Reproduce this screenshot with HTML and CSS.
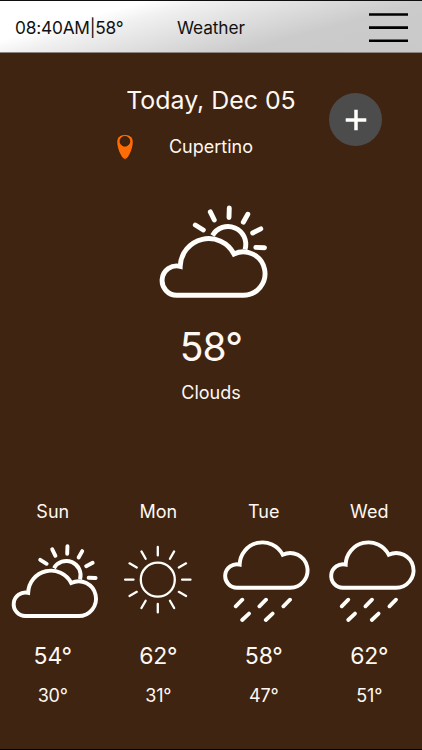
FILE: index.html
```
<!DOCTYPE html>
<html lang="en">
<head>
<meta charset="utf-8">
<title>Weather</title>
<link rel="stylesheet" href="styles.css">
</head>
<body>
<svg class="defs" aria-hidden="true">
  <symbol id="cloud" viewBox="0 0 130 115">
    <path d="M27 100.3A14.7 14.7 0 1 1 30.2 71.3A28.5 28.5 0 0 1 84 59A21.7 21.7 0 1 1 93 100.3Z"/>
  </symbol>
  <symbol id="partly" viewBox="0 0 130 115">
    <path d="M27 100.3A14.7 14.7 0 1 1 30.2 71.3A28.5 28.5 0 0 1 84 59A21.7 21.7 0 1 1 93 100.3Z"/>
    <path d="M62.5 40.5A17.8 17.8 0 0 1 95 54.5"/>
    <path stroke-linecap="round" d="M45.3 30L53.3 35M60.3 16.9L64.3 25M79.3 13L79 22.5M97.8 19.2L93.3 27.2M110.8 33.8L102.7 38M105.8 52.4L114.500 52.7"/>
  </symbol>
</svg>
<div class="app">
  <header class="bar">
    <span class="status">08:40AM|58°</span>
    <h1 class="title">Weather</h1>
    <button class="menu" aria-label="Menu"><svg viewBox="0 0 39 30"><path d="M0 1.500H39M0 14.600H39M0 27.800H39"/></svg></button>
  </header>
  <main class="today">
    <h2 class="date">Today, Dec 05</h2>
    <div class="place">
      <svg class="pin" viewBox="0 0 18 28"><path d="M9 1.500C4 1.500 .8 4.300 .8 9C.8 15 4 22 6.500 25Q9 28 11.500 25C14 22 17.200 15 17.200 9C17.200 4.300 14 1.500 9 1.500Z"/><circle cx="8.900" cy="8.300" r="4.900"/></svg>
      <span>Cupertino</span>
    </div>
    <button class="add" aria-label="Add"><svg viewBox="0 0 22 22"><path d="M11 .7V21.300M.7 11H21.300"/></svg></button>
    <svg class="now"><use href="#partly"/></svg>
    <div class="temp">58°</div>
    <div class="sky">Clouds</div>
  </main>
  <section class="forecast">
    <div class="day"><span class="name">Sun</span>
      <svg class="icon" viewBox="0 0 105.500 90"><use href="#partly" x="4" y="0.800" width="104" height="92"/></svg>
      <span class="high">54°</span><span class="low">30°</span></div>
    <div class="day"><span class="name">Mon</span>
      <svg class="icon sun" viewBox="0 0 105.500 90"><g transform="translate(51.800 44.700)"><circle r="17"/><path d="M0-24.300V-32.700M0 24.300V32.700M-24.300 0H-32.700M24.300 0H32.700M12.150-21L16.350-28.300M21-12.150L28.300-16.350M21 12.150L28.300 16.350M12.150 21L16.350 28.300M-12.150 21L-16.350 28.300M-21 12.150L-28.300 16.350M-21-12.150L-28.300-16.350M-12.150-21L-16.350-28.300"/></g></svg>
      <span class="high">62°</span><span class="low">31°</span></div>
    <div class="day"><span class="name">Tue</span>
      <svg class="icon" viewBox="0 0 105.500 90"><use href="#cloud" x="4.500" y="-27.500" width="104" height="92"/><path class="rain" d="M31.300 64.700L24.700 71.300M55 64.700L48.400 71.300M79 64.700L72.400 71.300M38 78.600L31.200 85M61.600 78.600L54.800 85"/></svg>
      <span class="high">58°</span><span class="low">47°</span></div>
    <div class="day"><span class="name">Wed</span>
      <svg class="icon" viewBox="0 0 105.500 90"><use href="#cloud" x="4.500" y="-27.500" width="104" height="92"/><path class="rain" d="M31.300 64.700L24.700 71.300M55 64.700L48.400 71.300M79 64.700L72.400 71.300M38 78.600L31.200 85M61.600 78.600L54.800 85"/></svg>
      <span class="high">62°</span><span class="low">51°</span></div>
  </section>
</div>
</body>
</html>
```
FILE: styles.css
```
* { box-sizing: border-box; }
body { margin: 0; font-family: Inter, "Liberation Sans", sans-serif; color: #fff8f2; background: #3e2411; }
h1, h2 { margin: 0; font-weight: 400; }
button { border: 0; padding: 0; background: none; }
svg { display: block; fill: none; stroke: #fffefb; stroke-width: 4.9; }
.defs { position: absolute; width: 0; height: 0; }
.app { position: relative; display: flex; flex-direction: column; width: 422px; height: 750px; border-top: 1px solid #100d10; border-bottom: 1px solid #000; background: #3e2411; overflow: hidden; }

.bar { display: flex; align-items: center; height: 52px; padding: 0 14px 0 15px; color: #111; background: linear-gradient(165deg, #fff 0%, #fff 24%, #f0f0f0 34%, #cbcbcb 70%, #c9c9c9 100%); border-bottom: 1px solid #8d8680; }
.status { width: 162px; font-size: 17.3px; line-height: 24px; letter-spacing: -.2px; white-space: nowrap; padding-top: 2px; }
.title { flex: 1; font-size: 17.3px; line-height: 24px; letter-spacing: -.1px; padding-top: 2px; }
.menu { width: 39px; height: 30px; margin-top: 2px; }
.menu svg { width: 39px; height: 30px; stroke: #000; stroke-width: 2.6; }

.today { position: relative; display: flex; flex-direction: column; align-items: center; height: 440px; padding-top: 31px; }
.date { font-size: 24.9px; line-height: 32px; white-space: nowrap; }
.place { display: grid; grid-template-columns: 1fr auto 1fr; align-items: center; width: 100%; height: 28px; margin-top: 16px; font-size: 18px; }
.pin { width: 18px; height: 28px; justify-self: end; margin-right: 35px; margin-top: 1px; fill: #ff6b05; stroke: #24150b; stroke-width: .7; }
.pin circle { fill: #3e2411; }
.add { position: absolute; left: 329px; top: 40px; display: grid; place-items: center; width: 53px; height: 53px; border-radius: 50%; background: #4c4c4c; }
.add svg { width: 22px; height: 22px; stroke-width: 3.5; }
.now { width: 130px; height: 115px; margin: 35px 0 0 8px; }
.temp { margin-top: 12px; font-size: 39px; line-height: 50px; letter-spacing: -.8px; }
.sky { margin-top: 9px; font-size: 18px; line-height: 24px; }

.forecast { display: grid; grid-template-columns: repeat(4, 1fr); }
.day { display: flex; flex-direction: column; align-items: center; padding-top: 7px; }
.name { font-size: 18px; line-height: 24px; }
.icon { width: 105.5px; height: 90px; margin-top: 11px; overflow: visible; }
.sun { stroke-width: 2.3; stroke-linecap: round; }
.rain { stroke-width: 3.8; stroke-linecap: round; }
.high { margin-top: 16px; font-size: 23px; line-height: 30px; letter-spacing: -.2px; }
.low { margin-top: 13px; font-size: 18px; line-height: 24px; letter-spacing: -.2px; }
```
